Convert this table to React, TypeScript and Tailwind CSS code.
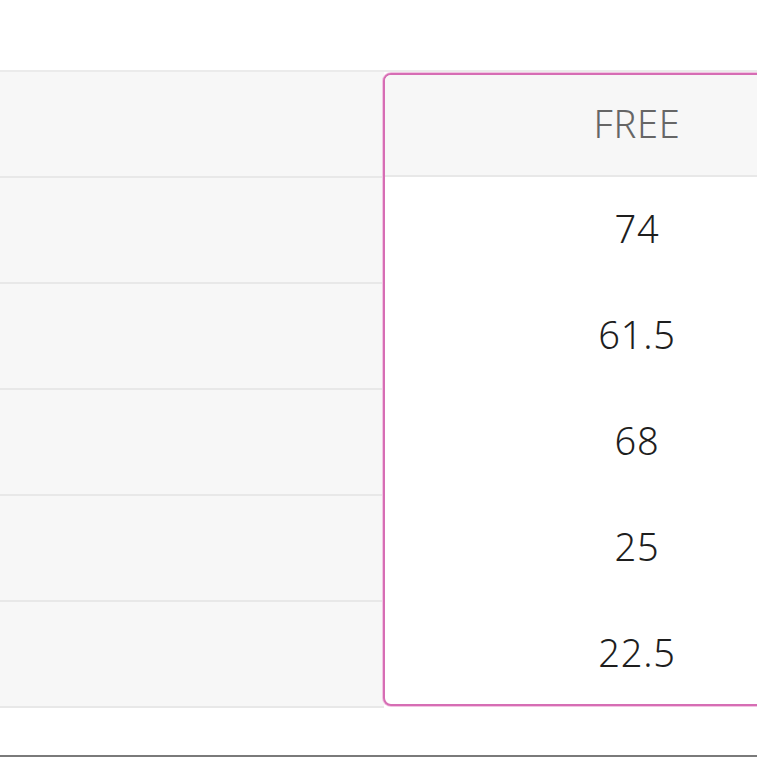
import React from "react";

const values = ["74", "61.5", "68", "25", "22.5"];

export default function App() {
  return (
    <div className="w-[757px] h-[757px] overflow-hidden bg-white flex flex-col" style={{ fontFamily: '"Noto Sans", "Noto Sans CJK JP", sans-serif' }}>
      <div className="h-[70px] shrink-0" />
      <div className="flex shrink-0 border-t-2 border-[#ebebeb]">
        <div className="w-[384px] shrink-0 flex flex-col bg-[#f7f7f7]">
          {[0, 1, 2, 3, 4, 5].map((i) => (
            <div key={i} className="h-[106px] border-b-2 border-[#e8e8e8]" />
          ))}
        </div>
        <div className="w-[508px] shrink-0 -ml-px mt-[1px] h-[633px] border-2 border-[#d66db4] shadow-[0_0_0_1px_#f2c4e2] rounded-[8px] overflow-hidden flex flex-col bg-white">
          <div className="h-[102px] shrink-0 bg-[#f7f7f7] border-b-2 border-[#e8e8e8] flex items-center justify-center pb-[3px] text-[38px] font-light tracking-[0.02em] text-[#666]">
            FREE
          </div>
          {values.map((v) => (
            <div key={v} className="h-[106px] shrink-0 flex items-center justify-center pb-[3px] text-[38px] font-light tracking-[0.02em] text-[#1e1e1e]">
              {v}
            </div>
          ))}
        </div>
      </div>
      <div className="flex-1" />
      <div className="h-[2px] bg-[#7a7a7a] shrink-0" />
    </div>
  );
}
